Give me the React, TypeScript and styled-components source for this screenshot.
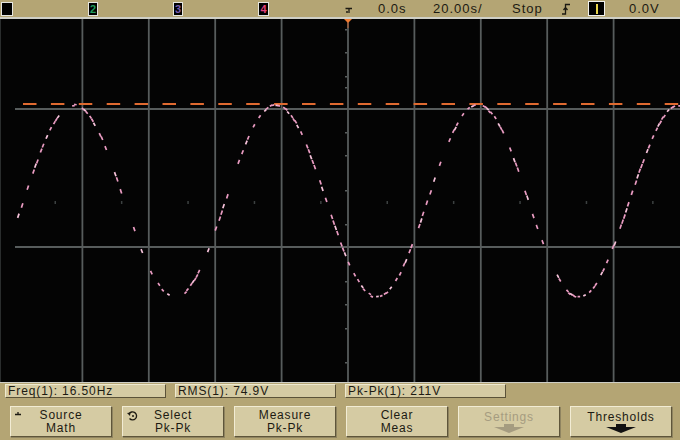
import React from 'react';
import styled, { createGlobalStyle } from 'styled-components';

const TAN = '#b4a574';
const KEY = '#d5cba3';
const INK = '#1c1a12';

const GlobalStyle = createGlobalStyle`
  html, body {
    margin: 0;
    padding: 0;
    background: #000;
  }
  body {
    font-family: "Liberation Sans", Arial, sans-serif;
  }
`;

const Frame = styled.div`
  width: 680px;
  height: 440px;
  display: flex;
  flex-direction: column;
  background: ${TAN};
  overflow: hidden;
`;

const StatusBar = styled.div`
  height: 17px;
  display: flex;
  align-items: center;
  background: ${TAN};
  border-bottom: 2px solid #cfcfc6;
  color: ${INK};
  font-size: 13px;
  letter-spacing: 1px;
`;

const ChannelSlot = styled.div<{ $pl: number }>`
  width: 85px;
  height: 100%;
  display: flex;
  align-items: center;
  padding-left: ${(p) => p.$pl}px;
  box-sizing: border-box;
`;

const ChannelBox = styled.div<{ $color: string; $w: number }>`
  width: ${(p) => p.$w}px;
  height: 14px;
  box-sizing: border-box;
  background: #000;
  border: 1px solid #e6e6e0;
  color: ${(p) => p.$color};
  font-size: 11px;
  font-weight: bold;
  letter-spacing: 0;
  line-height: 12px;
  text-align: center;
`;

const Cell = styled.div<{ $w?: number; $pl: number }>`
  ${(p) => (p.$w ? `width: ${p.$w}px;` : 'flex: 1;')}
  padding-left: ${(p) => p.$pl}px;
  box-sizing: border-box;
  display: flex;
  align-items: center;
  height: 100%;
  white-space: nowrap;
`;

const SourceBox = styled.div`
  width: 17px;
  height: 15px;
  box-sizing: border-box;
  background: #000;
  border: 1px solid #f2f2ee;
  display: flex;
  align-items: center;
  justify-content: center;
  &::after {
    content: '';
    width: 2px;
    height: 10px;
    background: #e8d34a;
  }
`;

const Screen = styled.div`
  height: 364px;
  background: #040404;
  border-bottom: 1px solid #cfcfc6;
  box-sizing: border-box;
  svg {
    display: block;
  }
`;

const Bottom = styled.div`
  flex: 1;
  display: flex;
  flex-direction: column;
  padding-top: 1px;
`;

const MeasureRow = styled.div`
  display: flex;
  gap: 9px;
  padding-left: 5px;
`;

const MeasureBox = styled.div`
  width: 161px;
  height: 14px;
  box-sizing: border-box;
  background: ${KEY};
  border: 1px solid;
  border-color: #efe9cf #5b5238 #5b5238 #efe9cf;
  padding-left: 2px;
  font-size: 12px;
  line-height: 12px;
  letter-spacing: 0.9px;
  color: ${INK};
  white-space: nowrap;
`;

const KeyRow = styled.div`
  display: flex;
  gap: 10px;
  padding-left: 10px;
  margin-top: 8px;
`;

const SoftKey = styled.div<{ $dim?: boolean }>`
  position: relative;
  width: 102px;
  height: 31px;
  box-sizing: border-box;
  background: ${KEY};
  border: 1px solid;
  border-color: #f2ecd4 #5e553a #5e553a #f2ecd4;
  box-shadow: 1px 1px 0 #8f8460;
  display: flex;
  flex-direction: column;
  align-items: center;
  justify-content: center;
  color: ${(p) => (p.$dim ? '#a59c80' : INK)};
  font-size: 12px;
  line-height: 13px;
  letter-spacing: 0.8px;
`;

const KeyLine = styled.span`
  display: block;
  white-space: nowrap;
`;

const KeyMark = styled.span`
  position: absolute;
  left: 4px;
  top: 4px;
  display: flex;
`;

const DownArrow = ({ color }: { color: string }) => (
  <svg width="30" height="9" viewBox="0 0 30 9">
    <path d="M10 0 H20 V3 H30 L15 9 L0 3 H10 Z" fill={color} />
  </svg>
);

/* grid geometry */
const W = 680;
const H = 363;
const TOP = 19;
const DIV = 66.4;
const verticals = Array.from({ length: 9 }, (_, i) => 16 + DIV * (i + 1));
const dotsX = Array.from({ length: 10 }, (_, i) => 55 + DIV * i);
const axisTicks = [29, 52, 76, 87, 132, 155, 190, 224, 281, 304, 328, 362];

const wave = (x: number) => 201 - 96 * Math.cos((2 * Math.PI * (x - 74)) / 202) - TOP;
const rnd = (i: number) => {
  const s = Math.sin(i * 12.9898) * 43758.5453;
  return s - Math.floor(s);
};

const trace: { x1: number; y1: number; x2: number; y2: number }[] = [];
for (let i = 0, x = 16; x < 680; i++, x += 1.9) {
  if (rnd(i) < 0.5) continue;
  const j = (rnd(i + 1000) - 0.5) * 1.8;
  trace.push({ x1: x, y1: wave(x) + j, x2: x + 0.9, y2: wave(x + 0.9) + j });
}

function Graticule() {
  return (
    <svg width={W} height={H} viewBox={`0 0 ${W} ${H}`}>
      <line x1="0.5" y1="0" x2="0.5" y2={H} stroke="#2a2d2d" strokeWidth="1" />
      {verticals.map((x) => (
        <line key={x} x1={x} y1="0" x2={x} y2={H} stroke="#575c5c" strokeWidth="1.8" />
      ))}
      <line x1="15" y1={109 - TOP} x2={W} y2={109 - TOP} stroke="#575c5c" strokeWidth="1.8" />
      <line x1="15" y1={247 - TOP} x2={W} y2={247 - TOP} stroke="#575c5c" strokeWidth="1.8" />
      {dotsX.map((x) => (
        <rect key={x} x={x - 0.5} y={201 - TOP} width="1.5" height="3" fill="#3c4141" />
      ))}
      {axisTicks.map((y) => (
        <rect key={y} x="345" y={y - TOP} width="2" height="1.5" fill="#5a5f5f" />
      ))}
      <line
        x1="23"
        y1={104 - TOP}
        x2={W}
        y2={104 - TOP}
        stroke="#e06a30"
        strokeWidth="2"
        strokeDasharray="13.5 14.4"
      />
      <path d="M344 0 H352 L348 4 Z" fill="#f07a30" />
      <line x1="348" y1="3" x2="348" y2="9" stroke="#c06030" strokeWidth="1" />
      {trace.map((s, i) => (
        <line
          key={i}
          x1={s.x1}
          y1={s.y1}
          x2={s.x2}
          y2={s.y2}
          stroke={i % 4 === 0 ? '#f8c4dc' : '#ea9cc2'}
          strokeWidth="1.7"
          strokeLinecap="square"
        />
      ))}
    </svg>
  );
}

export default function App() {
  return (
    <>
      <GlobalStyle />
      <Frame>
        <StatusBar>
          <ChannelSlot $pl={1}>
            <ChannelBox $color="#e8d34a" $w={12} />
          </ChannelSlot>
          <ChannelSlot $pl={3}>
            <ChannelBox $color="#1f9a5a" $w={10}>2</ChannelBox>
          </ChannelSlot>
          <ChannelSlot $pl={3}>
            <ChannelBox $color="#7a5cae" $w={10}>3</ChannelBox>
          </ChannelSlot>
          <ChannelSlot $pl={3}>
            <ChannelBox $color="#e0407a" $w={11}>4</ChannelBox>
          </ChannelSlot>
          <Cell $w={20} $pl={5}>
            <svg width="8" height="9" viewBox="0 0 8 9">
              <path d="M0.5 4.5 H7 M4 4.5 V9 M1 8 H3" stroke={INK} strokeWidth="1.3" fill="none" />
            </svg>
          </Cell>
          <Cell $w={60} $pl={18}>0.0s</Cell>
          <Cell $w={80} $pl={13}>20.00s/</Cell>
          <Cell $w={55} $pl={12}>Stop</Cell>
          <Cell $w={30} $pl={7}>
            <svg width="8" height="12" viewBox="0 0 8 12">
              <path d="M0 11 H3.5 V1.5 H8 M1.5 7 L3.5 4.5 L5.5 7" stroke={INK} strokeWidth="1.3" fill="none" />
            </svg>
          </Cell>
          <Cell $w={40} $pl={3}>
            <SourceBox />
          </Cell>
          <Cell $pl={4}>0.0V</Cell>
        </StatusBar>

        <Screen>
          <Graticule />
        </Screen>

        <Bottom>
          <MeasureRow>
            <MeasureBox>Freq(1): 16.50Hz</MeasureBox>
            <MeasureBox>RMS(1): 74.9V</MeasureBox>
            <MeasureBox>Pk-Pk(1): 211V</MeasureBox>
          </MeasureRow>
          <KeyRow>
            <SoftKey>
              <KeyMark>
                <svg width="7" height="6" viewBox="0 0 7 6">
                  <path d="M0 3.5 H6 M3 1 V3" stroke={INK} strokeWidth="1.3" fill="none" />
                </svg>
              </KeyMark>
              <KeyLine>Source</KeyLine>
              <KeyLine>Math</KeyLine>
            </SoftKey>
            <SoftKey>
              <KeyMark>
                <svg width="11" height="10" viewBox="0 0 11 10">
                  <path d="M2 3 A4 4 0 1 1 2.5 7.5" stroke={INK} strokeWidth="1.3" fill="none" />
                  <path d="M0 2 L3.5 1.5 L3 5 Z" fill={INK} />
                  <circle cx="6" cy="5" r="1" fill={INK} />
                </svg>
              </KeyMark>
              <KeyLine>Select</KeyLine>
              <KeyLine>Pk-Pk</KeyLine>
            </SoftKey>
            <SoftKey>
              <KeyLine>Measure</KeyLine>
              <KeyLine>Pk-Pk</KeyLine>
            </SoftKey>
            <SoftKey>
              <KeyLine>Clear</KeyLine>
              <KeyLine>Meas</KeyLine>
            </SoftKey>
            <SoftKey $dim>
              <KeyLine>Settings</KeyLine>
              <DownArrow color="#a59c80" />
            </SoftKey>
            <SoftKey>
              <KeyLine>Thresholds</KeyLine>
              <DownArrow color="#111" />
            </SoftKey>
          </KeyRow>
        </Bottom>
      </Frame>
    </>
  );
}
